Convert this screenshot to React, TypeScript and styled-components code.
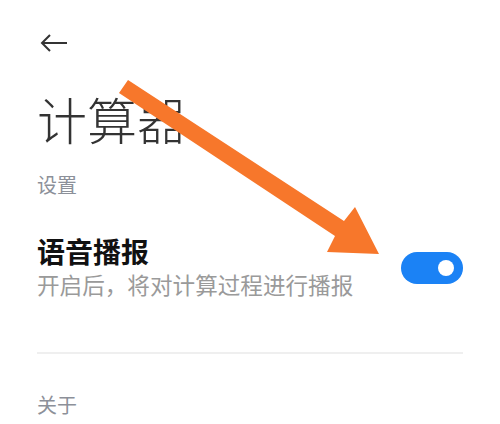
import React from "react";
import styled, { createGlobalStyle } from "styled-components";

const Global = createGlobalStyle`
  html, body { margin: 0; padding: 0; background: #ffffff; }
  body { font-family: "Noto Sans CJK SC", "Noto Sans", sans-serif; }
`;

const Page = styled.div`
  position: relative;
  width: 500px;
  height: 424px;
  overflow: hidden;
  background: #ffffff;
  display: flex;
  flex-direction: column;
  padding: 0 37px;
  box-sizing: border-box;
`;

const TopBar = styled.div`
  height: 86px;
  display: flex;
  align-items: center;
  padding-left: 3px;
  box-sizing: border-box;
`;

const BackButton = styled.button`
  border: none;
  background: none;
  padding: 0;
  width: 28px;
  height: 20px;
  display: flex;
  align-items: center;
  color: #333;
`;

const Title = styled.h1`
  margin: 0;
  font-size: 50px;
  line-height: 64px;
  font-weight: 300;
  color: #333333;
`;

const SectionLabel = styled.div<{ $top: number }>`
  margin-top: ${(p) => p.$top}px;
  font-size: 20px;
  line-height: 26px;
  color: #8c9099;
`;

const Row = styled.div`
  display: flex;
  align-items: center;
  justify-content: space-between;
  margin-top: 37px;
`;

const RowText = styled.div`
  display: flex;
  flex-direction: column;
  gap: 4px;
`;

const RowTitle = styled.div`
  font-size: 28px;
  line-height: 32px;
  font-weight: 700;
  color: #111111;
`;

const RowSub = styled.div`
  font-size: 22.6px;
  line-height: 28px;
  color: #9a9a9a;
  white-space: nowrap;
`;

const Switch = styled.div`
  width: 62px;
  height: 32px;
  border-radius: 16px;
  background: #1b82f5;
  display: flex;
  align-items: center;
  justify-content: flex-end;
  padding-right: 9px;
  box-sizing: border-box;
  margin-top: 2px;
`;

const Knob = styled.div`
  width: 16px;
  height: 16px;
  border-radius: 50%;
  background: #ffffff;
`;

const Divider = styled.hr`
  border: none;
  height: 2px;
  background: #efefef;
  margin: 53px 0 0 0;
`;

const Annotation = styled.svg`
  position: absolute;
  left: 0;
  top: 0;
  pointer-events: none;
`;

export default function App() {
  return (
    <>
      <Global />
      <Page>
        <TopBar>
          <BackButton aria-label="back">
            <svg width="28" height="20" viewBox="0 0 28 20" fill="none">
              <path d="M27 10H2M10 2L2 10L10 18" stroke="#333" strokeWidth="2" strokeLinejoin="miter" />
            </svg>
          </BackButton>
        </TopBar>
        <Title>计算器</Title>
        <SectionLabel $top={22}>设置</SectionLabel>
        <Row>
          <RowText>
            <RowTitle>语音播报</RowTitle>
            <RowSub>开启后，将对计算过程进行播报</RowSub>
          </RowText>
          <Switch>
            <Knob />
          </Switch>
        </Row>
        <Divider />
        <SectionLabel $top={38}>关于</SectionLabel>
        <Annotation width="500" height="424" viewBox="0 0 500 424">
          <polygon
            points="119,93 128,80 344,221 355,207 379,254 327,252 335,236"
            fill="#f7772b"
          />
        </Annotation>
      </Page>
    </>
  );
}
